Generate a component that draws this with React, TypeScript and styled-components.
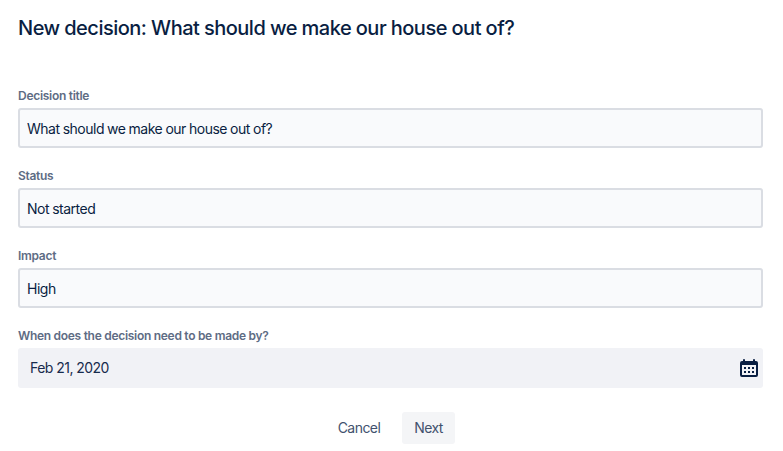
import React from "react";
import styled, { createGlobalStyle } from "styled-components";

const GlobalStyle = createGlobalStyle`
  *, *::before, *::after { box-sizing: border-box; }
  body {
    margin: 0;
    background: #fff;
    color: #091e42;
    font-family: Inter, sans-serif;
    font-size: 14px;
    overflow: hidden;
  }
`;

const Page = styled.main`
  padding: 16px 20px 0 18px;
`;

const Title = styled.h1`
  margin: 0 0 48px;
  font-size: 20px;
  font-weight: 550;
  line-height: 24px;
  letter-spacing: -0.5px;
  word-spacing: -0.2px;
  white-space: nowrap;
`;

const Form = styled.form`
  display: flex;
  flex-direction: column;
  gap: 20px;
`;

const Field = styled.div`
  display: flex;
  flex-direction: column;
`;

const Label = styled.label`
  height: 20px;
  font-size: 12px;
  font-weight: 600;
  line-height: 16px;
  letter-spacing: -0.29px;
  color: #5e6c84;
`;

const TextInput = styled.input`
  width: 100%;
  height: 40px;
  padding: 0 7px;
  border: 2px solid #dadde3;
  border-radius: 3px;
  outline: none;
  background: #f9fafc;
  color: #091e42;
  font: 400 14px/20px Inter, sans-serif;
  letter-spacing: -0.5px;
  word-spacing: -0.3px;
`;

const DatePicker = styled.div`
  display: flex;
  align-items: center;
  justify-content: space-between;
  height: 40px;
  padding: 0 5px 0 12px;
  border-radius: 3px;
  background: #f1f2f6;
  color: #172b4d;
  line-height: 20px;
  letter-spacing: -0.5px;
  word-spacing: -0.2px;
`;

const CalendarGlyph = styled.svg`
  display: block;
  width: 18px;
  height: 18px;
  color: #091e42;
`;

const Actions = styled.div`
  display: flex;
  justify-content: center;
  gap: 10px;
  margin-top: 4px;
`;

const Button = styled.button<{ $filled?: boolean }>`
  width: ${(p) => (p.$filled ? 53 : 66)}px;
  height: 32px;
  padding: 0;
  border: 0;
  border-radius: 3px;
  background: ${(p) => (p.$filled ? "#f4f5f7" : "transparent")};
  color: #42526e;
  font: 400 14px/32px Inter, sans-serif;
  letter-spacing: -0.55px;
`;

const CalendarIcon = () => (
  <CalendarGlyph viewBox="0 0 18 18" fill="currentColor" aria-hidden="true">
    <path
      fillRule="evenodd"
      d="M3 1a1 1 0 0 1 2 0v1h8V1a1 1 0 0 1 2 0v1h1a2 2 0 0 1 2 2v12a2 2 0 0 1-2 2H2a2 2 0 0 1-2-2V4a2 2 0 0 1 2-2h1zM2 6v10h14V6z"
    />
    <path d="M4 8h2v2H4zM8 8h2v2H8zM12 8h2v2h-2zM4 12h2v2H4zM8 12h2v2H8zM12 12h2v2h-2z" />
  </CalendarGlyph>
);

const textFields = [
  { id: "title", label: "Decision title", value: "What should we make our house out of?" },
  { id: "status", label: "Status", value: "Not started" },
  { id: "impact", label: "Impact", value: "High" },
];

const App = () => (
  <>
    <GlobalStyle />
    <Page>
      <Title>New decision: What should we make our house out of?</Title>
      <Form>
        {textFields.map(({ id, label, value }) => (
          <Field key={id}>
            <Label htmlFor={id}>{label}</Label>
            <TextInput id={id} defaultValue={value} spellCheck={false} />
          </Field>
        ))}
        <Field>
          <Label>When does the decision need to be made by?</Label>
          <DatePicker>
            <span>Feb 21, 2020</span>
            <CalendarIcon />
          </DatePicker>
        </Field>
        <Actions>
          <Button type="button">Cancel</Button>
          <Button type="button" $filled>Next</Button>
        </Actions>
      </Form>
    </Page>
  </>
);

export default App;
